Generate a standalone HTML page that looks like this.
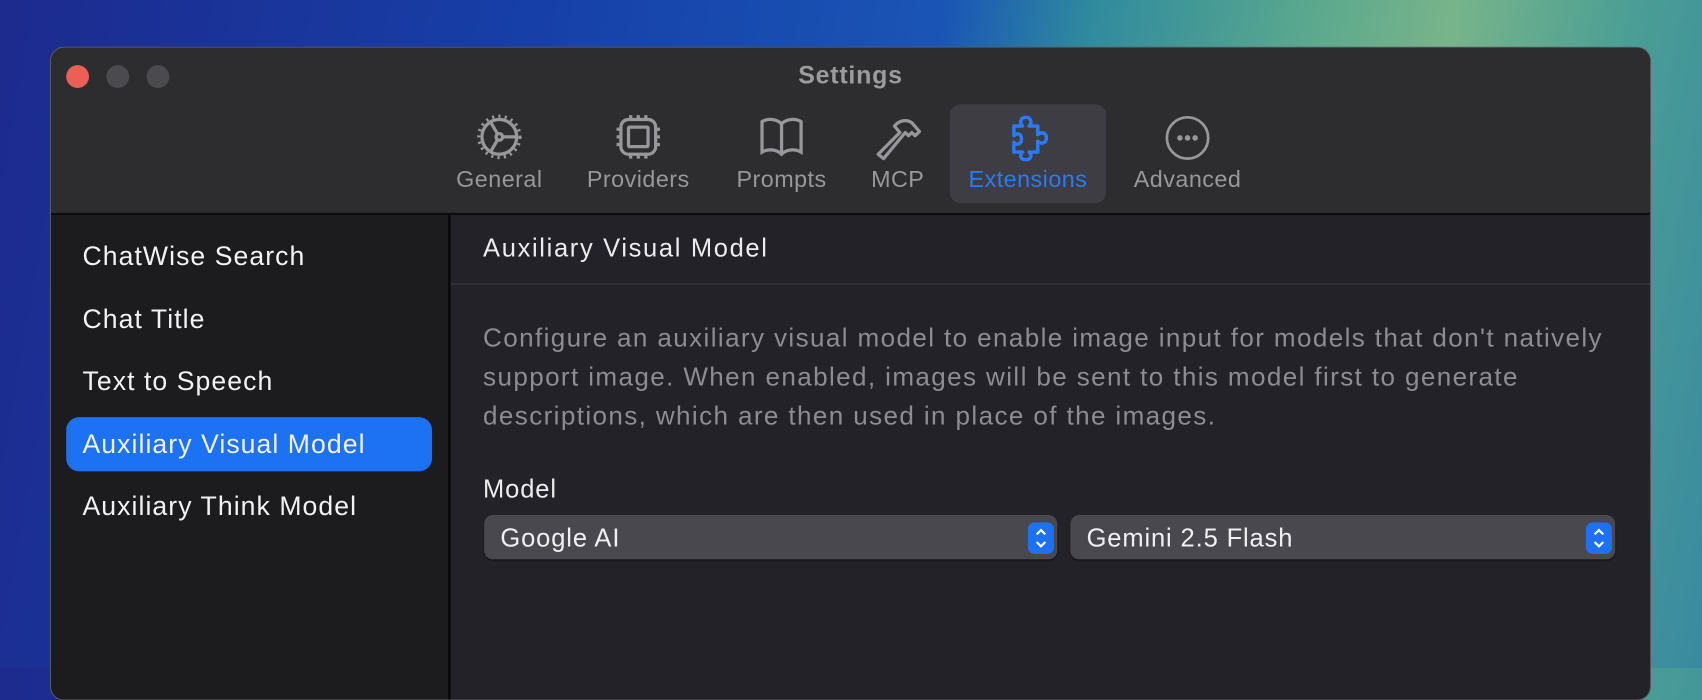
<!DOCTYPE html>
<html><head><meta charset="utf-8"><style>
html,body{margin:0;padding:0;width:1702px;height:668px;overflow:hidden;background:linear-gradient(100deg,#1d2a8e 0%,#1640a8 30%,#1a55b5 52%,#2f8a9e 60%,#5aa88e 72%,#78b48a 80%,#4a9e95 90%,#3a8aa0 100%);}
body{font-family:"Liberation Sans",Helvetica,Arial,sans-serif;letter-spacing:0.05em;}
#s{position:absolute;left:0;top:0;width:1568px;height:616px;transform:scale(1.0855,1.0862);transform-origin:0 0;}
.win{position:absolute;left:47px;top:44px;width:1473px;height:600px;border-radius:12px;overflow:hidden;background:#232228;box-shadow:0 0 0 1px #5a5a5e;}
.tb{position:absolute;left:0;top:0;width:100%;height:152px;background:#2d2d2f;border-bottom:2px solid #0c0c0e;}
.dot{position:absolute;top:16px;width:21px;height:21px;border-radius:50%;background:#4b4b4f;}
.title{position:absolute;left:0;right:0;top:12px;text-align:center;color:#9c9c9f;font-weight:bold;font-size:23px;letter-spacing:0.03em;}
.it{position:absolute;top:52px;height:91px;text-align:center;color:#98989c;font-size:21.5px;letter-spacing:0.02em;}
.it svg{display:block;margin:8px auto 0;}
.it span{position:absolute;left:-20px;right:-20px;top:57px;}
.side{position:absolute;left:0;top:154px;width:366px;height:460px;background:#1c1c1e;border-right:2px solid #050505;}
.si{position:absolute;left:29px;color:#f2f2f4;font-size:24.5px;letter-spacing:0.04em;}
.sel{position:absolute;left:14px;top:186px;width:337px;height:50px;background:#1c72f2;border-radius:12px;}
.h{position:absolute;left:398px;top:171px;color:#ececee;font-size:23.5px;letter-spacing:0.065em;}
.hl{position:absolute;left:368px;right:0;top:217px;height:1px;background:#3a3a3e;}
.p{position:absolute;left:398px;top:250px;width:1100px;color:#8c8c91;font-size:24px;line-height:36px;letter-spacing:0.053em;white-space:nowrap;}
.m{position:absolute;left:398px;top:393px;color:#ececee;font-size:23.5px;}
.sb{position:absolute;top:431px;height:40px;background:#49484f;border-radius:8px;color:#f0f0f2;font-size:23.5px;box-shadow:0 1px 1px #111,0 -0.5px 0 #666;}
.sb span{position:absolute;left:15px;top:7px;}
.st{position:absolute;right:3px;top:6px;width:24px;height:29px;background:#1c72f2;border-radius:6px;}
</style></head><body><div id="s">
<div class="win">
<div class="tb">
<div class="dot" style="left:14px;background:#ec5f57"></div>
<div class="dot" style="left:51px"></div>
<div class="dot" style="left:88px"></div>
<div class="title">Settings</div>
<div class="it" style="left:363px;width:100px"><svg width="44" height="44" viewBox="0 0 44 44" fill="none" stroke="#98989c" stroke-width="3"><circle cx="22" cy="22" r="16"/><circle cx="22" cy="22" r="3"/><path d="M25 22h13M20.5 19.5L14 8.5M20.5 24.5L14 35.5"/><circle cx="22" cy="22" r="19" stroke-dasharray="2 3.9" stroke-width="3"/></svg><span>General</span></div>
<div class="it" style="left:481px;width:120px"><svg width="44" height="44" viewBox="0 0 44 44" fill="none" stroke="#98989c" stroke-width="3"><rect x="6" y="6" width="32" height="32" rx="7"/><rect x="13" y="13" width="18" height="18" rx="1"/><path d="M15 2v4M22 2v4M29 2v4M15 38v4M22 38v4M29 38v4M2 15h4M2 22h4M2 29h4M38 15h4M38 22h4M38 29h4"/></svg><span>Providers</span></div>
<div class="it" style="left:623px;width:100px"><svg width="44" height="44" viewBox="0 0 44 44" fill="none" stroke="#98989c" stroke-width="3"><path d="M22 10C17 5 9 5 4 8v28c5-3 13-3 18 2c5-5 13-5 18-2V8c-5-3-13-3-18 2zM22 10v28"/></svg><span>Prompts</span></div>
<div class="it" style="left:745px;width:70px"><svg width="46" height="46" viewBox="0 0 46 46" fill="none" stroke="#98989c" stroke-width="3" stroke-linejoin="round"><path d="M20 12c5-6 12-6 16-3l7 8-4 4-3-3-3 3-3-3L10 42l-5-4 20-20z"/></svg><span>MCP</span></div>
<div class="it" style="left:828px;width:144px;background:#3e3d43;border-radius:10px;color:#2a7bf5"><svg width="46" height="46" viewBox="0 0 46 46" fill="none" stroke="#2a7bf5" stroke-width="3.2" stroke-linejoin="round"><path d="M10 12h8c-3-3-2-8 3-8s6 5 3 8h8v8c3-3 8-2 8 3s-5 6-8 3v10h-8c3 3 2 7-3 7s-6-4-3-7h-8V27c3 3 7 2 7-3s-4-6-7-3z"/></svg><span>Extensions</span></div>
<div class="it" style="left:992px;width:110px"><svg width="46" height="46" viewBox="0 0 46 46" fill="none" stroke="#98989c" stroke-width="2.5"><circle cx="23" cy="23" r="19"/><circle cx="16" cy="23" r="1.3" fill="#98989c"/><circle cx="23" cy="23" r="1.3" fill="#98989c"/><circle cx="30" cy="23" r="1.3" fill="#98989c"/></svg><span>Advanced</span></div>
</div>
<div class="side">
<div class="sel"></div>
<div class="si" style="top:25px">ChatWise Search</div>
<div class="si" style="top:83px">Chat Title</div>
<div class="si" style="top:140px">Text to Speech</div>
<div class="si" style="top:198px">Auxiliary Visual Model</div>
<div class="si" style="top:255px">Auxiliary Think Model</div>
</div>
<div class="h">Auxiliary Visual Model</div>
<div class="hl"></div>
<div class="p">Configure an auxiliary visual model to enable image input for models that don't natively<br>support image. When enabled, images will be sent to this model first to generate<br>descriptions, which are then used in place of the images.</div>
<div class="m">Model</div>
<div class="sb" style="left:399px;width:528px"><span>Google AI</span><div class="st"><svg width="24" height="29" viewBox="0 0 24 29" fill="none" stroke="#fff" stroke-width="2"><path d="M8 11l4-4 4 4M8 18l4 4 4-4"/></svg></div></div>
<div class="sb" style="left:939px;width:502px"><span>Gemini 2.5 Flash</span><div class="st"><svg width="24" height="29" viewBox="0 0 24 29" fill="none" stroke="#fff" stroke-width="2"><path d="M8 11l4-4 4 4M8 18l4 4 4-4"/></svg></div></div>
</div>
</div></body></html>
